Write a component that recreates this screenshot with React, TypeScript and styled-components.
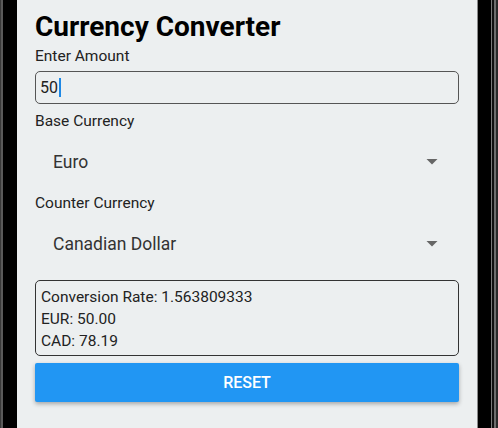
import styled, { createGlobalStyle } from "styled-components";

const GlobalStyle = createGlobalStyle`
  html, body {
    margin: 0;
    padding: 0;
    background: #000;
  }
  body {
    font-family: Roboto, "Noto Sans", "Liberation Sans", sans-serif;
  }
`;

interface PickerProps {
  value: string;
}

const Picker = ({ value }: PickerProps) => {
  return (
    <PickerRow>
      <span className='picker-value'>{value}</span>
      <svg width='12' height='6' viewBox='0 0 12 6'>
        <path d='M0.5 0 L11.5 0 L6 5.5 Z' fill='#666' />
      </svg>
    </PickerRow>
  );
};

const App = () => {
  return (
    <>
      <GlobalStyle />
      <Device>
        <LeftBezel />
        <Screen>
          <Title>Currency Converter</Title>
          <Label gap={3}>Enter Amount</Label>
          <AmountField>
            50
            <Caret />
          </AmountField>
          <Label gap={7}>Base Currency</Label>
          <Picker value='Euro' />
          <Label gap={0}>Counter Currency</Label>
          <Picker value='Canadian Dollar' />
          <ResultBox>
            <div>Conversion Rate: 1.563809333</div>
            <div>EUR: 50.00</div>
            <div>CAD: 78.19</div>
          </ResultBox>
          <ResetButton>RESET</ResetButton>
        </Screen>
        <RightBezel />
      </Device>
    </>
  );
};

const Device = styled.div`
  display: flex;
  width: 498px;
  height: 428px;
  overflow: hidden;
`;

const LeftBezel = styled.div`
  width: 17px;
  flex-shrink: 0;
  background: linear-gradient(
    to right,
    #3a3a3a 0px,
    #3a3a3a 1px,
    #5a5a5a 1px,
    #5a5a5a 3px,
    #000 3px
  );
`;

const RightBezel = styled.div`
  width: 21px;
  flex-shrink: 0;
  background: linear-gradient(
    to right,
    #8a8a8a 0px,
    #8a8a8a 1px,
    #000 1px,
    #000 14px,
    #7a7a7a 14px,
    #7a7a7a 15px,
    #111 15px,
    #111 17px,
    #6e6e6e 17px,
    #6e6e6e 19px,
    #2a2a2a 19px
  );
`;

const Screen = styled.div`
  width: 460px;
  flex-shrink: 0;
  background: #eceff0;
  padding: 11px 18px 0;
  box-sizing: border-box;
  display: flex;
  flex-direction: column;
`;

const Title = styled.h1`
  margin: 0;
  font-size: 28px;
  line-height: 32px;
  font-weight: 700;
  color: #000;
`;

const Label = styled.div<{ gap: number }>`
  margin-top: ${({ gap }) => gap}px;
  font-size: 15.5px;
  line-height: 20px;
  color: #222;
`;

const AmountField = styled.div`
  margin-top: 5px;
  height: 33px;
  box-sizing: border-box;
  border: 1px solid #555;
  border-radius: 5px;
  padding: 0 4px;
  display: flex;
  align-items: center;
  font-size: 16px;
  color: #222;
`;

const Caret = styled.span`
  display: inline-block;
  width: 2px;
  height: 19px;
  margin-left: 1px;
  background: #1e88e5;
`;

const PickerRow = styled.div`
  height: 62px;
  display: flex;
  align-items: center;
  justify-content: space-between;
  padding: 0 21px 0 18px;
  font-size: 17.5px;
  color: #333;

  svg {
    display: block;
  }
`;

const ResultBox = styled.div`
  margin-top: 5px;
  border: 1px solid #333;
  border-radius: 5px;
  padding: 5px 5px 3px;
  font-size: 15.5px;
  line-height: 22px;
  color: #222;
`;

const ResetButton = styled.button`
  margin-top: 7px;
  height: 39px;
  border: none;
  border-radius: 2px;
  background: #2196f3;
  color: #fff;
  font-family: Roboto, "Noto Sans", sans-serif;
  font-size: 16px;
  font-weight: 500;
  box-shadow: 0 2px 4px rgba(0, 0, 0, 0.3);
  cursor: pointer;
`;

export default App;
